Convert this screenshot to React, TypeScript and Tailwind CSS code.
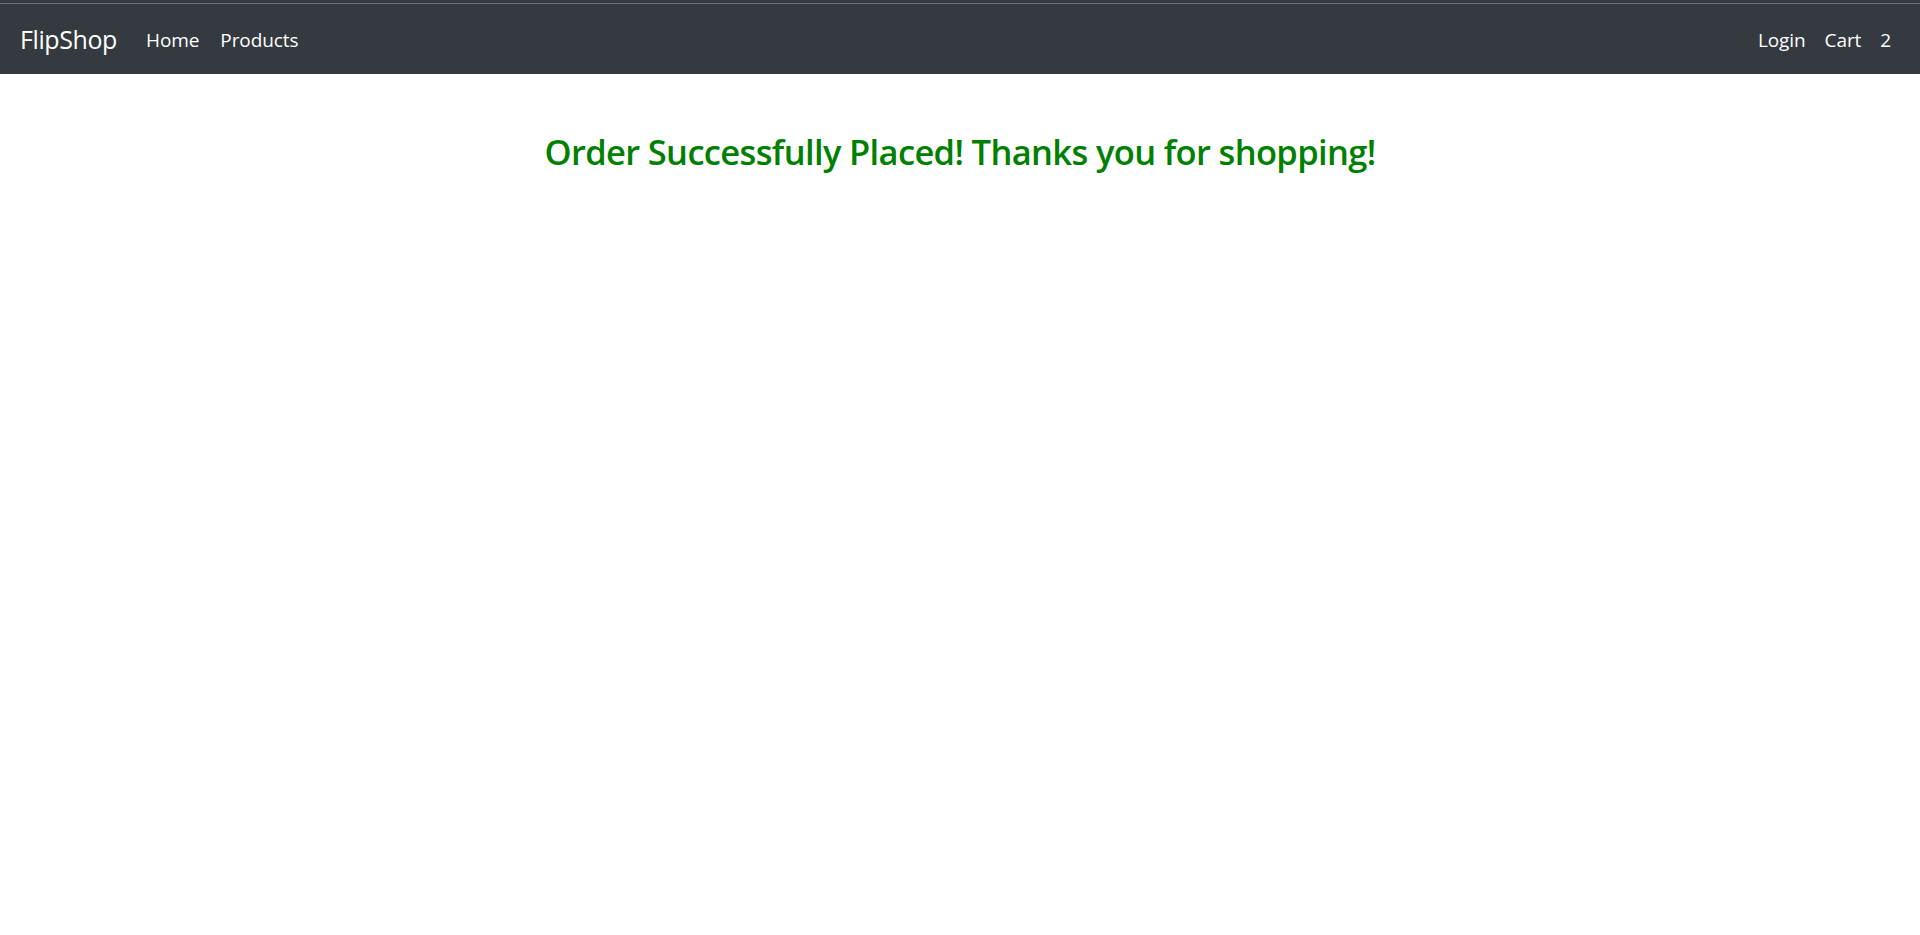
export default function App() {
  return (
    <div className="min-h-screen bg-white font-['Open_Sans',sans-serif]">
      {/* Navbar */}
      <nav className="h-[74px] bg-[#343a40] border-t-[3px] border-t-[#343a40] flex flex-col">
        <div className="h-px bg-[#6c6f73]" />
        <div className="flex-1 flex items-center justify-between pl-[20px] pr-[29px] pt-[2px] text-white">
          <div className="flex items-center">
            <span className="text-[25px] mr-[29px] tracking-[-0.4px]">FlipShop</span>
            <a className="text-[19px] mr-[21px] tracking-[-0.1px]">Home</a>
            <a className="text-[19px] tracking-[-0.1px]">Products</a>
          </div>
          <div className="flex items-center text-[19px] tracking-[-0.1px]">
            <a className="mr-[19px]">Login</a>
            <a className="mr-[19px]">Cart</a>
            <span>2</span>
          </div>
        </div>
      </nav>

      {/* Message */}
      <div className="pt-[56px] text-center">
        <h2 className="text-[34.5px] font-semibold text-[#008000] tracking-[-0.65px] leading-tight">
          Order Successfully Placed! Thanks you for shopping!
        </h2>
      </div>
    </div>
  );
}
